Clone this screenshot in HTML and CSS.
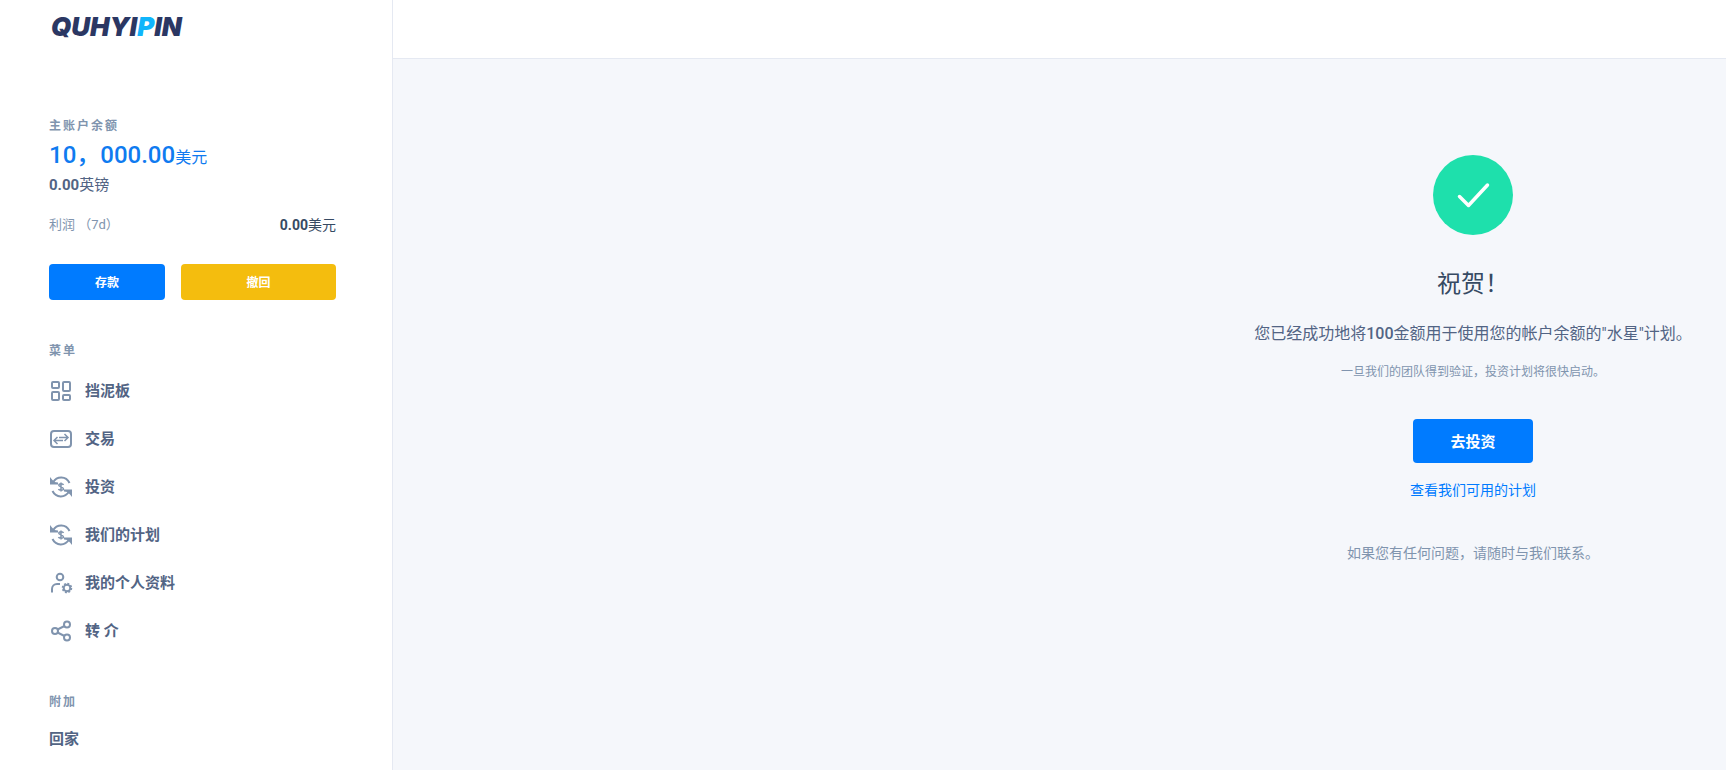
FILE: index.html
```
<!DOCTYPE html>
<html lang="zh-CN">
<head>
    <meta charset="UTF-8">
    <meta name="viewport" content="width=device-width, initial-scale=1.0">
    <title>QUHYIPIN</title>
    <link rel="stylesheet" href="styles.css">
</head>
<body>
    <div class="app">
        <aside class="sidebar">
            <div class="sidebar-head">
                <a href="#" class="logo">QUHYI<span>P</span>IN</a>
            </div>
            <div class="sidebar-body">
                <!-- balance -->
                <section class="account">
                    <h6 class="overline">主账户余额</h6>
                    <div class="balance">10，000.00<small>美元</small></div>
                    <div class="balance-sub"><b>0.00</b>英镑</div>
                    <div class="profit">
                        <span class="profit-label">利润 （7d）</span>
                        <span class="profit-value"><b>0.00</b>美元</span>
                    </div>
                    <div class="account-actions">
                        <button type="button" class="btn btn-primary deposit">存款</button>
                        <button type="button" class="btn btn-warning withdraw">撤回</button>
                    </div>
                </section>

                <!-- menu -->
                <nav class="menu">
                    <h6 class="overline">菜单</h6>
                    <ul>
                        <li><a href="#">
                            <svg class="icon" viewBox="0 0 24 24">
                                <rect x="3" y="3" width="7" height="6" rx="1"/>
                                <rect x="14" y="3" width="7" height="9" rx="1"/>
                                <rect x="3" y="13" width="7" height="8" rx="1"/>
                                <rect x="14" y="16" width="7" height="5" rx="1"/>
                            </svg>
                            挡泥板</a></li>
                        <li><a href="#">
                            <svg class="icon" viewBox="0 0 24 24">
                                <rect x="2" y="4" width="20" height="16" rx="3"/>
                                <path class="thin" d="M5 13.500h9M8.500 10l-3.500 3.500 3.500 3.500M10 10.500h9M15.500 7l3.500 3.500-3.500 3.500"/>
                            </svg>
                            交易</a></li>
                        <li><a href="#">
                            <svg class="icon" viewBox="0 0 24 24">
                                <path d="M4 7.500C8 0.800 17 1 20.500 8M20 16.500C16 23.200 7 23 3.500 16"/>
                                <path class="solid" d="M1 2L3 4.500L5.500 7L9 7.500V9.500H1ZM23 22L21 19.500L18.500 17L15 16.500V14.500H23Z"/>
                                <path class="thin" d="M14.500 10C14 8.500 10 8.300 9.700 10.200C9.500 12 14.500 11.800 14.500 13.900C14.500 15.800 10 15.600 9.500 14M12 7.500v9"/>
                            </svg>
                            投资</a></li>
                        <li><a href="#">
                            <svg class="icon" viewBox="0 0 24 24">
                                <path d="M4 7.500C8 0.800 17 1 20.500 8M20 16.500C16 23.200 7 23 3.500 16"/>
                                <path class="solid" d="M1 2L3 4.500L5.500 7L9 7.500V9.500H1ZM23 22L21 19.500L18.500 17L15 16.500V14.500H23Z"/>
                                <path class="thin" d="M14.500 10C14 8.500 10 8.300 9.700 10.200C9.500 12 14.500 11.800 14.500 13.900C14.500 15.800 10 15.600 9.500 14M12 7.500v9"/>
                            </svg>
                            我们的计划</a></li>
                        <li><a href="#">
                            <svg class="icon" viewBox="0 0 24 24">
                                <circle cx="11" cy="6" r="3.300"/>
                                <path d="M3 21.500v-3.500a5 5 0 0 1 5-5h3"/>
                                <circle cx="18" cy="17" r="3.300"/>
                                <circle class="teeth" cx="18" cy="17" r="4.500"/>
                            </svg>
                            我的个人资料</a></li>
                        <li><a href="#">
                            <svg class="icon" viewBox="0 0 24 24">
                                <circle cx="6" cy="12" r="3"/>
                                <circle cx="18" cy="5.500" r="3"/>
                                <circle cx="18" cy="18.500" r="3"/>
                                <path d="M8.500 10.500l7-3.500M8.500 13.500l7 3.500"/>
                            </svg>
                            转 介</a></li>
                    </ul>
                </nav>

                <!-- additional -->
                <nav class="menu menu-extra">
                    <h6 class="overline">附加</h6>
                    <ul>
                        <li><a href="#">回家</a></li>
                    </ul>
                </nav>
            </div>
        </aside>

        <div class="page">
            <header class="topbar"></header>
            <main class="content">
                <section class="result">
                    <div class="result-icon">
                        <svg viewBox="0 0 80 80">
                            <path d="M26.500 41.500L35.500 50.500L54.500 30"/>
                        </svg>
                    </div>
                    <h4>祝贺！</h4>
                    <p class="result-text">您已经成功地将<b>100</b>金额用于使用您的帐户余额的"水星"计划。</p>
                    <p class="result-note">一旦我们的团队得到验证，投资计划将很快启动。</p>
                    <button type="button" class="btn btn-primary btn-lg">去投资</button>
                    <a href="#" class="plans-link">查看我们可用的计划</a>
                    <p class="result-help">如果您有任何问题，请随时与我们联系。</p>
                </section>
            </main>
        </div>
    </div>
</body>
</html>
```

FILE: styles.css
```
* {
    box-sizing: border-box;
}

body {
    margin: 0;
    font-family: Roboto, "Noto Sans CJK SC", sans-serif;
    font-size: 14px;
    line-height: 20px;
    color: #526484;
    background-color: #f5f7fb;
}

h4, h6, p, ul {
    margin: 0;
    padding: 0;
}

ul {
    list-style: none;
}

a {
    color: inherit;
    text-decoration: none;
}

b {
    font-weight: 500;
}

.app {
    display: flex;
    height: 100vh;
    overflow: hidden;
}

/* Sidebar */
.sidebar {
    flex: 0 0 393px;
    background-color: #fff;
    border-right: 1px solid #e5e9f2;
    overflow: hidden;
}

.sidebar-head {
    height: 58px;
    padding: 13px 51px;
}

.logo {
    font-family: Inter, sans-serif;
    font-size: 26px;
    line-height: 28px;
    font-weight: 900;
    font-style: italic;
    color: #2b3763;
}

.logo span {
    color: #10b5fb;
}

.sidebar-body {
    padding: 58px 56px 0 49px;
}

.overline {
    font-size: 12px;
    line-height: 20px;
    font-weight: 700;
    letter-spacing: 2px;
    color: #8094ae;
}

.balance {
    margin-top: 4px;
    font-size: 24px;
    line-height: 30px;
    font-weight: 500;
    color: #0f7bf0;
}

.balance small {
    font-size: 16px;
    font-weight: 400;
}

.balance-sub {
    margin-top: 2px;
    font-size: 15px;
}

.balance-sub b {
    font-weight: 700;
}

.profit {
    display: flex;
    justify-content: space-between;
    margin-top: 20px;
}

.profit-label {
    font-size: 13px;
    color: #8094ae;
}

.profit-value {
    color: #364a63;
}

.profit-value b {
    font-weight: 700;
}

.account-actions {
    display: flex;
    gap: 16px;
    margin-top: 29px;
}

.deposit {
    flex: 3;
}

.withdraw {
    flex: 4;
}

.btn {
    height: 36px;
    padding: 0 0 2px;
    border: none;
    border-radius: 4px;
    font-family: inherit;
    font-size: 12px;
    font-weight: 700;
    color: #fff;
    cursor: pointer;
}

.btn-primary {
    background-color: #007bff;
}

.btn-warning {
    background-color: #f4bd0e;
}

.btn-lg {
    width: 120px;
    height: 44px;
    font-size: 15px;
}

/* Menu */
.menu {
    margin-top: 41px;
}

.menu ul {
    margin-top: 6px;
}

.menu a {
    display: flex;
    align-items: center;
    gap: 12px;
    height: 48px;
    font-size: 15px;
    font-weight: 700;
}

.menu-extra {
    margin-top: 37px;
}

.menu-extra ul {
    margin-top: 3px;
}

.icon {
    width: 24px;
    height: 24px;
    fill: none;
    stroke: #8094ae;
    stroke-width: 2;
}

.icon .thin {
    stroke-width: 1.5;
}

.icon .solid {
    fill: #8094ae;
    stroke: none;
}

.icon .teeth {
    stroke-width: 1.5;
    stroke-dasharray: 2 1.5;
}

/* Page */
.page {
    flex: 1;
    min-width: 0;
}

.topbar {
    height: 59px;
    background-color: #fff;
    border-bottom: 1px solid #e5e9f2;
}

.content {
    display: flex;
    justify-content: flex-end;
    padding-top: 96px;
}

.result {
    display: flex;
    flex-direction: column;
    align-items: center;
    width: 506px;
    text-align: center;
}

.result-icon {
    width: 80px;
    height: 80px;
    border-radius: 50%;
    background-color: #1ee0ac;
}

.result-icon svg {
    display: block;
    fill: none;
    stroke: #fff;
    stroke-width: 3.5;
    stroke-linecap: round;
    stroke-linejoin: round;
}

.result h4 {
    margin-top: 33px;
    font-size: 24px;
    line-height: 32px;
    font-weight: 400;
    color: #364a63;
}

.result-text {
    margin-top: 20px;
    font-size: 16px;
    line-height: 28px;
}

.result-note {
    margin-top: 14px;
    font-size: 12px;
    color: #8094ae;
}

.result .btn {
    margin-top: 37px;
}

.plans-link {
    margin-top: 17px;
    color: #007bff;
}

.result-help {
    margin-top: 43px;
    color: #8094ae;
}
```
